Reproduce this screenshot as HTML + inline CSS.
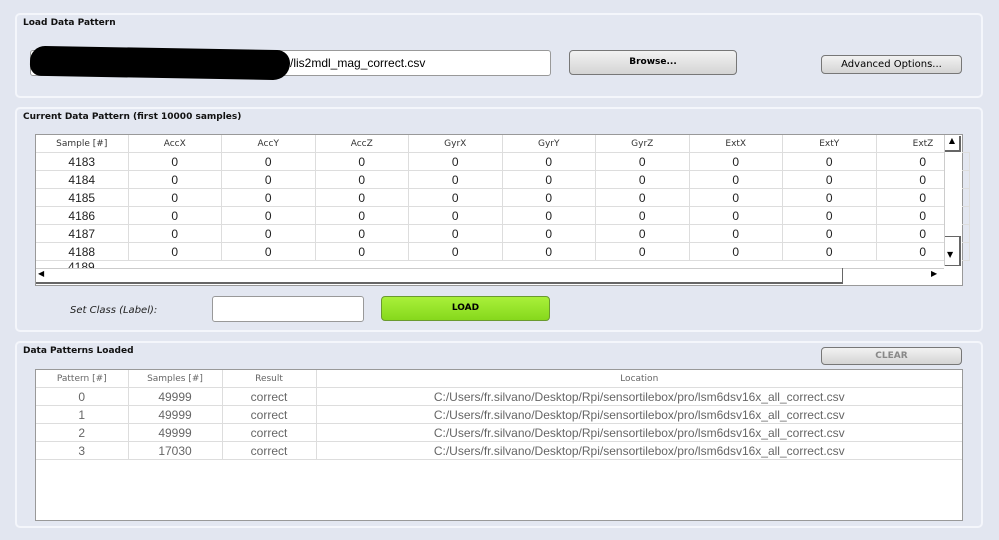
<!DOCTYPE html><html><head><style>
body{margin:0;width:999px;height:540px;background:#e2e6f0;font-family:Tahoma,"DejaVu Sans",sans-serif;position:relative;overflow:hidden}
.p{position:absolute;left:15px;width:964px;border:2px solid #f4f6fb;border-radius:5px;background:#e3e7f1}
.t{position:absolute;font-size:9px;font-weight:bold;color:#111;left:6px;top:3px}
.a{position:absolute}
.btn{position:absolute;border:1px solid #777;border-radius:4px;background:linear-gradient(#f2f2f2,#d4d4d4);font-size:9px;text-align:center;box-sizing:border-box}
table{border-collapse:collapse;position:absolute;table-layout:fixed}
td{border-right:1px solid #ddd;border-bottom:1px solid #ddd;text-align:center;height:17px;padding:0;font-size:12px;color:#222;font-family:"Liberation Sans",sans-serif}
td.h{font-size:9px;color:#333;height:17px;font-family:"DejaVu Sans",sans-serif}
#t2 td{color:#666}#t2 td.h{color:#666}
</style></head><body>
<div class="p" style="top:13px;height:81px"><div class="t">Load Data Pattern</div></div>
<div class="p" style="top:107px;height:221px"><div class="t">Current Data Pattern (first 10000 samples)</div></div>
<div class="p" style="top:341px;height:183px"><div class="t">Data Patterns Loaded</div></div>
<div class="a" style="left:30px;top:50px;width:519px;height:24px;background:#fff;border:1px solid #999;border-radius:3px;font-family:'Liberation Sans',sans-serif;font-size:12px;line-height:24px;text-indent:259px">/lis2mdl_mag_correct.csv</div>
<div class="a" style="left:30px;top:48px;width:260px;height:30px;background:#000;border-radius:16px 14px 18px 12px;transform:rotate(1deg)"></div>
<div class="btn" style="left:569px;top:50px;width:168px;height:25px;line-height:23px;font-weight:bold">Browse...</div>
<div class="btn" style="left:821px;top:55px;width:141px;height:19px;line-height:17px;font-size:10px">Advanced Options...</div>
<div class="a" style="left:35px;top:134px;width:926px;height:150px;background:#fff;border:1px solid #999"></div>
<table style="left:36px;top:135px;width:908px"><colgroup><col style="width:92px"><col span="9" style="width:93.5px"></colgroup>
<tr><td class="h">Sample [#]</td><td class="h">AccX</td><td class="h">AccY</td><td class="h">AccZ</td><td class="h">GyrX</td><td class="h">GyrY</td><td class="h">GyrZ</td><td class="h">ExtX</td><td class="h">ExtY</td><td class="h" style="border-right:0">ExtZ</td></tr>
<tr><td>4183</td><td>0</td><td>0</td><td>0</td><td>0</td><td>0</td><td>0</td><td>0</td><td>0</td><td>0</td></tr>
<tr><td>4184</td><td>0</td><td>0</td><td>0</td><td>0</td><td>0</td><td>0</td><td>0</td><td>0</td><td>0</td></tr>
<tr><td>4185</td><td>0</td><td>0</td><td>0</td><td>0</td><td>0</td><td>0</td><td>0</td><td>0</td><td>0</td></tr>
<tr><td>4186</td><td>0</td><td>0</td><td>0</td><td>0</td><td>0</td><td>0</td><td>0</td><td>0</td><td>0</td></tr>
<tr><td>4187</td><td>0</td><td>0</td><td>0</td><td>0</td><td>0</td><td>0</td><td>0</td><td>0</td><td>0</td></tr>
<tr><td>4188</td><td>0</td><td>0</td><td>0</td><td>0</td><td>0</td><td>0</td><td>0</td><td>0</td><td>0</td></tr>
</table>
<div class="a" style="left:36px;top:260px;width:908px;height:8px;overflow:hidden;font-family:'Liberation Sans';font-size:12px;color:#222"><span style="position:absolute;left:32px;top:0">4189</span></div>
<div class="a" style="left:36px;top:268px;width:908px;height:16px;background:#fff;border-top:1px solid #ccc"></div>
<div class="a" style="left:36px;top:268px;width:806px;height:14px;border-bottom:2px solid #666;border-right:1px solid #666"></div>
<div class="a" style="left:38px;top:269px;font-size:8px">◀</div>
<div class="a" style="left:931px;top:269px;font-size:8px">▶</div>
<div class="a" style="left:944px;top:135px;width:17px;height:131px;border-left:1px solid #ccc;background:#fff"></div>
<div class="a" style="left:945px;top:136px;width:14px;height:14px;border-right:2px solid #666;border-bottom:2px solid #666;font-size:8px;text-align:center">▲</div>
<div class="a" style="left:945px;top:236px;width:14px;height:28px;border-right:2px solid #666;border-bottom:1px solid #666;border-top:1px solid #666"></div>
<div class="a" style="left:947px;top:250px;font-size:8px">▼</div>
<div class="a" style="left:70px;top:305px;font-size:10px;font-style:italic;color:#222">Set Class (Label):</div>
<div class="a" style="left:212px;top:296px;width:150px;height:24px;background:#fff;border:1px solid #999;border-radius:3px"></div>
<div class="btn" style="left:381px;top:296px;width:169px;height:25px;line-height:23px;font-weight:bold;background:linear-gradient(#a9f03a,#86d81c);border-color:#6a9a30">LOAD</div>
<div class="btn" style="left:821px;top:347px;width:141px;height:18px;line-height:16px;font-weight:bold;color:#888">CLEAR</div>
<div class="a" style="left:35px;top:369px;width:926px;height:150px;background:#fff;border:1px solid #999"></div>
<table id="t2" style="left:36px;top:370px;width:926px"><colgroup><col style="width:92px"><col style="width:94px"><col style="width:94px"><col></colgroup>
<tr><td class="h">Pattern [#]</td><td class="h">Samples [#]</td><td class="h">Result</td><td class="h" style="border-right:0">Location</td></tr>
<tr><td>0</td><td>49999</td><td>correct</td><td style="border-right:0">C:/Users/fr.silvano/Desktop/Rpi/sensortilebox/pro/lsm6dsv16x_all_correct.csv</td></tr>
<tr><td>1</td><td>49999</td><td>correct</td><td style="border-right:0">C:/Users/fr.silvano/Desktop/Rpi/sensortilebox/pro/lsm6dsv16x_all_correct.csv</td></tr>
<tr><td>2</td><td>49999</td><td>correct</td><td style="border-right:0">C:/Users/fr.silvano/Desktop/Rpi/sensortilebox/pro/lsm6dsv16x_all_correct.csv</td></tr>
<tr><td>3</td><td>17030</td><td>correct</td><td style="border-right:0">C:/Users/fr.silvano/Desktop/Rpi/sensortilebox/pro/lsm6dsv16x_all_correct.csv</td></tr>
</table>
</body></html>
